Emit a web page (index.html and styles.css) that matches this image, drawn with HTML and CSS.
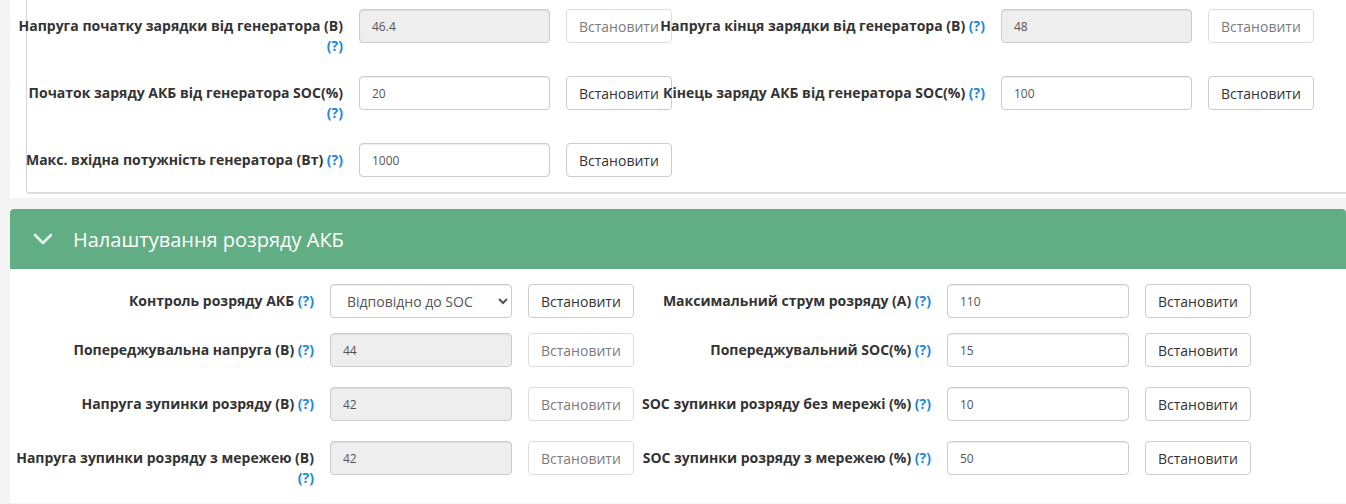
FILE: index.html
```html
<!DOCTYPE html>
<html lang="uk">
<head>
  <meta charset="UTF-8">
  <meta name="viewport" content="width=device-width, initial-scale=1.0">
  <title>Налаштування АКБ</title>
  <link rel="stylesheet" href="styles.css">
</head>
<body>
  <!-- Заряд від генератора (нижня частина блоку) -->
  <div class="panel panel-top">
    <div class="box">
      <div class="row">
        <div class="field">
          <label class="field-label">Напруга початку зарядки від генератора (В) <span class="help">(?)</span></label>
          <input class="input" type="text" value="46.4" disabled>
          <button class="btn" disabled>Встановити</button>
        </div>
        <div class="field">
          <label class="field-label">Напруга кінця зарядки від генератора (В) <span class="help">(?)</span></label>
          <input class="input" type="text" value="48" disabled>
          <button class="btn" disabled>Встановити</button>
        </div>
      </div>
      <div class="row">
        <div class="field">
          <label class="field-label">Початок заряду АКБ від генератора SOC(%) <span class="help">(?)</span></label>
          <input class="input" type="text" value="20">
          <button class="btn">Встановити</button>
        </div>
        <div class="field">
          <label class="field-label">Кінець заряду АКБ від генератора SOC(%) <span class="help">(?)</span></label>
          <input class="input" type="text" value="100">
          <button class="btn">Встановити</button>
        </div>
      </div>
      <div class="row row-last">
        <div class="field">
          <label class="field-label">Макс. вхідна потужність генератора (Вт) <span class="help">(?)</span></label>
          <input class="input" type="text" value="1000">
          <button class="btn">Встановити</button>
        </div>
      </div>
    </div>
  </div>

  <!-- Налаштування розряду АКБ -->
  <div class="panel panel-discharge">
    <div class="panel-heading">
      <svg class="chevron" width="20" height="12" viewBox="0 0 20 12">
        <path d="M2 2 L10 10 L18 2" fill="none" stroke="#e6f2eb" stroke-width="2.6" stroke-linecap="round" stroke-linejoin="round"/>
      </svg>
      <span class="panel-title">Налаштування розряду АКБ</span>
    </div>
    <div class="panel-body">
      <div class="row">
        <div class="field">
          <label class="field-label">Контроль розряду АКБ <span class="help">(?)</span></label>
          <select class="input select">
            <option>Відповідно до SOC</option>
            <option>Відповідно до напруги</option>
          </select>
          <button class="btn">Встановити</button>
        </div>
        <div class="field">
          <label class="field-label">Максимальний струм розряду (А) <span class="help">(?)</span></label>
          <input class="input" type="text" value="110">
          <button class="btn">Встановити</button>
        </div>
      </div>
      <div class="row row-wide">
        <div class="field">
          <label class="field-label">Попереджувальна напруга (В) <span class="help">(?)</span></label>
          <input class="input" type="text" value="44" disabled>
          <button class="btn" disabled>Встановити</button>
        </div>
        <div class="field">
          <label class="field-label">Попереджувальний SOC(%) <span class="help">(?)</span></label>
          <input class="input" type="text" value="15">
          <button class="btn">Встановити</button>
        </div>
      </div>
      <div class="row row-wide">
        <div class="field">
          <label class="field-label">Напруга зупинки розряду (В) <span class="help">(?)</span></label>
          <input class="input" type="text" value="42" disabled>
          <button class="btn" disabled>Встановити</button>
        </div>
        <div class="field">
          <label class="field-label">SOC зупинки розряду без мережі (%) <span class="help">(?)</span></label>
          <input class="input" type="text" value="10">
          <button class="btn">Встановити</button>
        </div>
      </div>
      <div class="row row-last">
        <div class="field">
          <label class="field-label">Напруга зупинки розряду з мережею (В) <span class="help">(?)</span></label>
          <input class="input" type="text" value="42" disabled>
          <button class="btn" disabled>Встановити</button>
        </div>
        <div class="field">
          <label class="field-label">SOC зупинки розряду з мережею (%) <span class="help">(?)</span></label>
          <input class="input" type="text" value="50">
          <button class="btn">Встановити</button>
        </div>
      </div>
    </div>
  </div>
</body>
</html>
```

FILE: styles.css
```css
body {
  margin: 0;
  background: #f4f4f4;
  font-family: "Open Sans", "Liberation Sans", sans-serif;
  color: #333;
  overflow: hidden;
}

.panel {
  margin-left: 10px;
  background: #fff;
}

/* верхній блок, видно лише низ */
.panel-top {
  padding-bottom: 4px;
  margin-bottom: 11px;
}

.box {
  margin-left: 16px;
  border-left: 1px solid #d6d6d6;
  border-bottom: 2px solid #dcdcdc;
  border-bottom-left-radius: 4px;
  padding: 9px 0 15px;
}

.box .row {
  margin-left: -12px;
}

.row {
  display: flex;
  align-items: flex-start;
  margin-bottom: 20px;
}

.row-last {
  margin-bottom: 0;
}

.field {
  display: flex;
  align-items: flex-start;
  flex: 0 0 642px;
  width: 642px;
}

/* підпис лежить поверх кнопки сусідньої колонки */
.field-label {
  position: relative;
  z-index: 1;
  flex: 0 0 328px;
  width: 328px;
  box-sizing: border-box;
  padding-top: 7px;
  text-align: right;
  font-size: 14px;
  font-weight: bold;
  line-height: 20px;
}

.help {
  color: #1d87dc;
}

.input {
  flex: 0 0 auto;
  box-sizing: border-box;
  width: 191px;
  height: 34px;
  margin-left: 16px;
  padding: 0 12px;
  font-family: inherit;
  font-size: 12px;
  color: #555;
  background: #fff;
  border: 1px solid #ccc;
  border-radius: 4px;
  box-shadow: inset 0 1px 1px rgba(0, 0, 0, 0.075);
}

.input:disabled {
  background: #eee;
  color: #555;
}

.btn {
  flex: 0 0 auto;
  box-sizing: border-box;
  height: 34px;
  margin-left: 16px;
  padding: 6px 12px;
  font-family: inherit;
  font-size: 14px;
  color: #333;
  background: #fff;
  border: 1px solid #ccc;
  border-radius: 4px;
  white-space: nowrap;
}

.btn:disabled {
  opacity: 0.65;
}

/* Налаштування розряду */
.panel-heading {
  display: flex;
  align-items: center;
  height: 60px;
  padding-left: 23px;
  background: #62ae84;
  border-radius: 4px 4px 0 0;
}

.chevron {
  margin-right: 20px;
}

.panel-title {
  font-size: 20px;
  color: #fff;
}

.panel-body {
  padding: 15px 0 15px;
}

.panel-discharge .field {
  flex-basis: 617px;
  width: 617px;
}

.panel-discharge .field-label {
  flex-basis: 304px;
  width: 304px;
}

.panel-discharge .input {
  width: 182px;
  font-size: 12px;
}

.panel-discharge .select {
  font-size: 14px;
  padding: 0 8px 0 12px;
}

.panel-discharge .row {
  margin-bottom: 15px;
}

.panel-discharge .row-wide {
  margin-bottom: 20px;
}

.panel-discharge .row-last {
  margin-bottom: 0;
}
```
